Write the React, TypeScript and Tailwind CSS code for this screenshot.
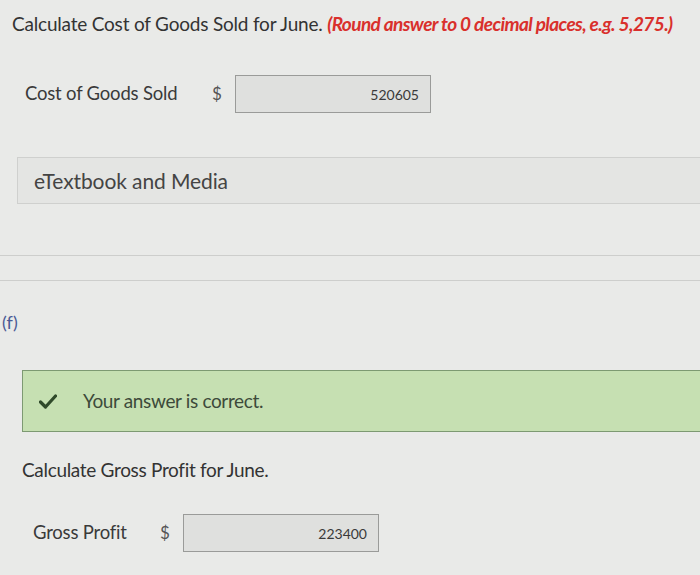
import React from 'react';

const font = { fontFamily: 'Lato, "Open Sans", sans-serif' };

const AnswerRow: React.FC<{ label: string; value: string; labelWidth: string; boxWidth: string }> = ({
  label,
  value,
  labelWidth,
  boxWidth,
}) => (
  <div className="flex items-center">
    <span className={`${labelWidth} text-[18.5px] tracking-[-0.2px] text-[#3a3a3a]`}>{label}</span>
    <span className="text-[17px] text-[#555] w-[23px]">$</span>
    <div
      className={`${boxWidth} h-[38px] border border-[#9a9b99] bg-[#dfe0de] flex items-center justify-end pr-[11px] text-[14px] text-[#3a3a3a]`}
    >
      {value}
    </div>
  </div>
);

export default function App() {
  return (
    <div className="w-[700px] h-[575px] overflow-hidden bg-[#e9eae8]" style={font}>
      <p className="pl-[12px] pt-[12px] text-[19px] leading-[24px] tracking-[-0.2px] text-[#333] whitespace-nowrap">
        Calculate Cost of Goods Sold for June.{' '}
        <span className="font-bold italic text-[#d9302c] tracking-[-0.6px]">
          (Round answer to 0 decimal places, e.g. 5,275.)
        </span>
      </p>

      <div className="pl-[25px] mt-[39px]">
        <AnswerRow label="Cost of Goods Sold" value="520605" labelWidth="w-[187px]" boxWidth="w-[196px]" />
      </div>

      <div className="ml-[17px] mt-[44px] h-[47px] border border-[#cfd0ce] border-r-0 bg-[#e4e5e3] flex items-center pl-[16px]">
        <span className="text-[21px] tracking-[-0.1px] text-[#444]">eTextbook and Media</span>
      </div>

      <div className="mt-[51px] border-t border-[#cdcecc]" />
      <div className="mt-[24px] border-t border-[#cdcecc]" />

      <p className="pl-[2px] mt-[29px] text-[18px] leading-[24px] text-[#4b5b96]">(f)</p>

      <div className="ml-[22px] mt-[36px] h-[62px] border border-[#7d9a72] border-r-0 bg-[#c6e0b2] flex items-center pl-[16px]">
        <svg width="18" height="15" viewBox="0 0 18 15" className="mr-[26px]">
          <path d="M1.5 8 L6.5 13 L16.5 2" fill="none" stroke="#2f4a2a" strokeWidth="3.2" strokeLinecap="round" strokeLinejoin="round" />
        </svg>
        <span className="text-[19px] tracking-[-0.35px] text-[#3d4a3a]">Your answer is correct.</span>
      </div>

      <p className="pl-[22px] mt-[26px] text-[19px] leading-[24px] tracking-[-0.32px] text-[#333]">
        Calculate Gross Profit for June.
      </p>

      <div className="pl-[33px] mt-[32px]">
        <AnswerRow label="Gross Profit" value="223400" labelWidth="w-[127px]" boxWidth="w-[196px]" />
      </div>
    </div>
  );
}
